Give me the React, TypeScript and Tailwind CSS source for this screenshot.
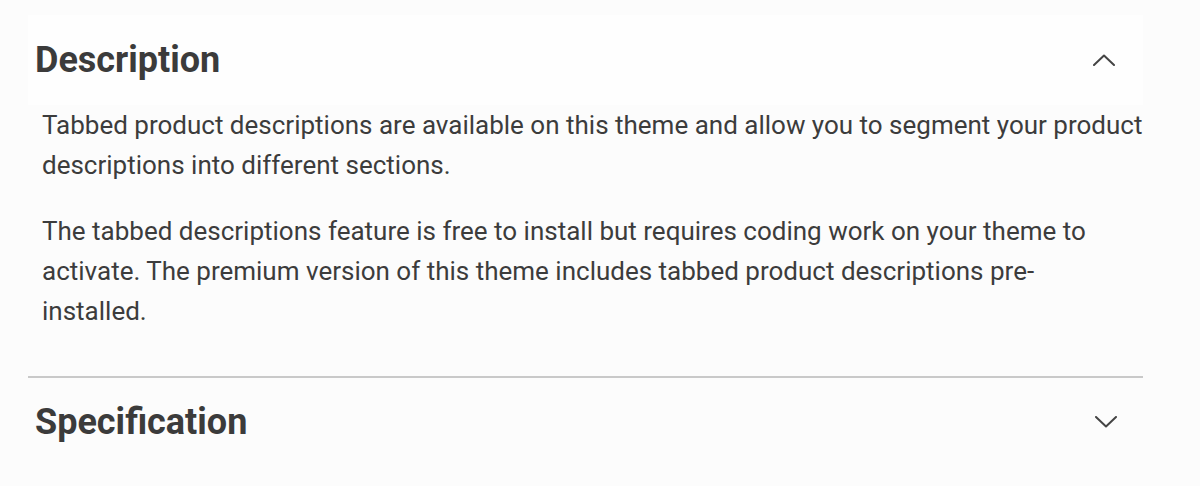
function Chevron({ up }: { up?: boolean }) {
  return (
    <svg width="22" height="12" viewBox="0 0 22 12" fill="none" className="shrink-0">
      <path
        d={up ? "M1 11L11 1.5L21 11" : "M1 1L11 10.5L21 1"}
        stroke="#444444"
        strokeWidth="2"
        strokeLinecap="round"
        strokeLinejoin="round"
      />
    </svg>
  );
}

export default function App() {
  return (
    <div
      className="min-h-[486px] w-[1200px] bg-[#fcfcfc] pt-[15px] text-[#3a3a3a]"
      style={{ fontFamily: "Roboto, 'Noto Sans', sans-serif" }}
    >
      <div className="ml-[28px] w-[1115px]">
        {/* Description - open */}
        <div className="flex h-[90px] items-center justify-between bg-[#fefefe] pl-[7px] pr-[28px]">
          <h2 className="text-[36px] font-bold leading-none text-[#3b3b3b]">Description</h2>
          <Chevron up />
        </div>
        <div className="pl-[14px] pr-0 pb-[45px] text-[26px] leading-[40px] text-[#3c3c3c]">
          <p className="mb-[26px]">
            Tabbed product descriptions are available on this theme and allow you to segment your product
            descriptions into different sections.
          </p>
          <p>
            The tabbed descriptions feature is free to install but requires coding work on your theme to
            activate. The premium version of this theme includes tabbed product descriptions pre-
            <br />
            installed.
          </p>
        </div>

        <div className="h-[2px] bg-[#c9c9c9]" />

        {/* Specification - closed */}
        <div className="flex h-[88px] items-center justify-between pl-[7px] pr-[26px]">
          <h2 className="text-[36px] font-bold leading-none text-[#3b3b3b]">Specification</h2>
          <Chevron />
        </div>
      </div>
    </div>
  );
}
